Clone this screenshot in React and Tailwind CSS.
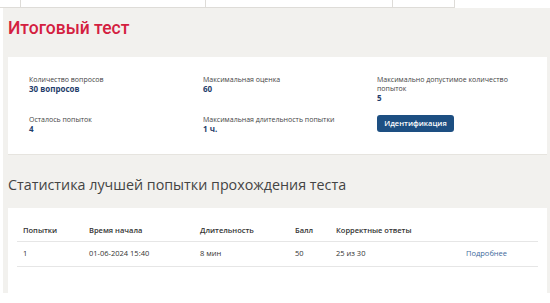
export default function App() {
  const font = { fontFamily: '"Open Sans", "Noto Sans", sans-serif' };
  return (
    <div className="w-[550px] h-[303px] bg-white overflow-hidden" style={font}>
      {/* tabs strip */}
      <div className="flex h-[8px]">
        <div className="w-[21px] border-r border-b border-[#dedcd8]" />
        <div className="w-[185px] border-r border-b border-[#dedcd8]" />
        <div className="w-[187px] border-r border-b border-[#dedcd8]" />
        <div className="w-[62px] border-r border-b border-[#dedcd8]" />
      </div>
      <div className="ml-[3px] h-[285px] bg-[#f2f1ee] pl-[5px] pr-[3px]">
        <h1 className="pt-[9px] text-[17.5px] leading-[22px] font-medium text-[#d4203f]" style={{ fontFamily: 'Roboto, "Open Sans", sans-serif' }}>
          Итоговый тест
        </h1>
        <div className="mt-[18px] bg-white border-b border-[#e6e4df] pt-[18px] pb-[20px] pl-[21px]">
          <div className="grid grid-cols-[174px_174px_150px] gap-y-[12px] text-[7px] leading-[9px] text-[#444]">
            <div>
              <div>Количество вопросов</div>
              <div className="text-[8px] leading-[10px] font-bold text-[#1f3d6b]">30 вопросов</div>
            </div>
            <div>
              <div>Максимальная оценка</div>
              <div className="text-[8px] leading-[10px] font-bold text-[#1f3d6b]">60</div>
            </div>
            <div>
              <div className="w-[142px]">Максимально допустимое количество попыток</div>
              <div className="text-[8px] leading-[10px] font-bold text-[#1f3d6b]">5</div>
            </div>
            <div>
              <div>Осталось попыток</div>
              <div className="text-[8px] leading-[10px] font-bold text-[#1f3d6b]">4</div>
            </div>
            <div>
              <div>Максимальная длительность попытки</div>
              <div className="text-[8px] leading-[10px] font-bold text-[#1f3d6b]">1 ч.</div>
            </div>
            <div>
              <button className="w-[77px] h-[17px] rounded-[3px] bg-[#1d4f82] text-white text-[7.5px] font-semibold leading-[17px] text-center">
                Идентификация
              </button>
            </div>
          </div>
        </div>
        <h2 className="mt-[20px] text-[14.3px] leading-[20px] text-[#444]">
          Статистика лучшей попытки прохождения теста
        </h2>
        <div className="mt-[13px] bg-white h-[85px] pt-[12px] pl-[9px] pr-[9px]">
          <div className="text-[7.5px] text-[#333]">
            <div className="flex h-[22px] items-center border-b border-[#e6e6e6] font-semibold">
              <div className="w-[72px] pl-[6px]">Попытки</div>
              <div className="w-[111px]">Время начала</div>
              <div className="w-[95px]">Длительность</div>
              <div className="w-[41px]">Балл</div>
              <div className="w-[130px]">Корректные ответы</div>
              <div className="flex-1" />
            </div>
            <div className="flex h-[25px] items-center border-b border-[#e6e6e6]">
              <div className="w-[72px] pl-[6px]">1</div>
              <div className="w-[111px]">01-06-2024 15:40</div>
              <div className="w-[95px]">8 мин</div>
              <div className="w-[41px]">50</div>
              <div className="w-[130px]">25 из 30</div>
              <div className="flex-1 text-[#3e6a9b]">Подробнее</div>
            </div>
          </div>
        </div>
      </div>
    </div>
  );
}
